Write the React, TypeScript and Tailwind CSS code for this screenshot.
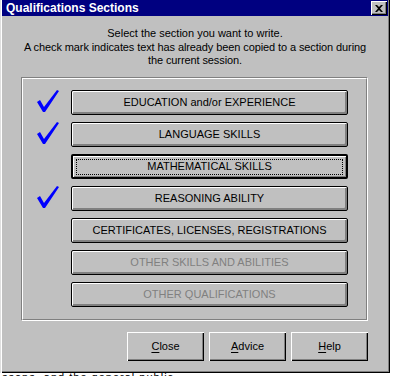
import React from 'react'

const sections = [
  { label: 'EDUCATION and/or EXPERIENCE', done: true },
  { label: 'LANGUAGE SKILLS', done: true },
  { label: 'MATHEMATICAL SKILLS', focused: true },
  { label: 'REASONING ABILITY', done: true },
  { label: 'CERTIFICATES, LICENSES, REGISTRATIONS' },
  { label: 'OTHER SKILLS AND ABILITIES', disabled: true },
  { label: 'OTHER QUALIFICATIONS', disabled: true }
]

const CheckMark = () => (
  <svg width="22" height="23" viewBox="0 0 22 23" className="block">
    <path d="M0 12 L3 10 L7 17 L20 0 L22 1 L8 22 L6 22 Z" fill="#0000ff" />
  </svg>
)

const SectionButton = ({ label, focused, disabled }: { label: string; focused?: boolean; disabled?: boolean }) => (
  <button
    className={
      'w-[277px] h-[25px] rounded-[2px] bg-[#c0c0c0] flex items-center justify-center border-black ' +
      (focused
        ? 'border-2 shadow-[inset_1px_1px_#fff,inset_-1px_-1px_#808080]'
        : 'border shadow-[inset_1px_1px_#fff,inset_-1px_-1px_#808080,inset_-2px_-2px_#808080]')
    }>
    {focused ? (
      <span className="w-[267px] h-[16px] border border-dotted border-black flex items-center justify-center">
        {label}
      </span>
    ) : (
      <span className={disabled ? 'text-[#808080]' : 'text-black'}>{label}</span>
    )}
  </button>
)

const DialogButton = ({ first, rest }: { first: string; rest: string }) => (
  <button className="w-[77px] h-[29px] bg-[#c0c0c0] flex items-center justify-center shadow-[inset_1px_1px_#fff,inset_-1px_-1px_#000,inset_-2px_-2px_#808080]">
    <span>
      <span className="underline underline-offset-2">{first}</span>
      {rest}
    </span>
  </button>
)

export default function App() {
  return (
    <div className="w-[394px] h-[376px] bg-white overflow-hidden font-['Liberation_Sans',Arial,sans-serif] text-[11px] text-black">
      <div className="w-[390px] h-[373px] bg-[#c0c0c0] flex flex-col shadow-[inset_1px_0_#dfdfdf,inset_2px_0_#fff,inset_-1px_-1px_#000,inset_-2px_-2px_#808080]">
        <div className="h-[16px] mx-[2px] bg-[#000080] flex items-center justify-between pl-[4px] pr-[1px]">
          <span className="text-white font-bold text-[12px]">Qualifications Sections</span>
          <div className="w-[16px] h-[14px] bg-[#c0c0c0] flex items-center justify-center shadow-[inset_1px_1px_#fff,inset_-1px_-1px_#000,inset_-2px_-2px_#808080]">
            <svg width="8" height="7" viewBox="0 0 8 7">
              <path d="M0 0h2l2 2 2-2h2L5 3.5 8 7H6L4 5 2 7H0l3-3.5z" fill="#000" />
            </svg>
          </div>
        </div>

        <div className="mt-[10px] flex flex-col items-center leading-[14px]">
          <p>Select the section you want to write.</p>
          <p className="mt-[1px] text-center leading-[13px] w-[350px] tracking-[-0.1px]">
            A check mark indicates text has already been copied to a section during the current session.
          </p>
        </div>

        <div className="ml-[21px] mt-[10px] w-[347px] h-[244px] border border-t-[#808080] border-l-[#808080] border-r-white border-b-white">
          <div className="w-full h-full border border-t-white border-l-white border-r-[#808080] border-b-[#808080] flex flex-col gap-[7px] pt-[11px]">
            {sections.map((s) => (
              <div key={s.label} className="flex items-start h-[25px]">
                <div className="w-[48px] pl-[14px]">{s.done && <CheckMark />}</div>
                <SectionButton label={s.label} focused={s.focused} disabled={s.disabled} />
              </div>
            ))}
          </div>
        </div>

        <div className="mt-[11px] mr-[22px] flex justify-end gap-[5px]">
          <DialogButton first="C" rest="lose" />
          <DialogButton first="A" rest="dvice" />
          <DialogButton first="H" rest="elp" />
        </div>
      </div>
      <div className="h-[3px] overflow-hidden">
        <p className="-mt-[2px] pl-[2px] leading-[13px] tracking-[1px]">ssons, and the general public</p>
      </div>
    </div>
  )
}
